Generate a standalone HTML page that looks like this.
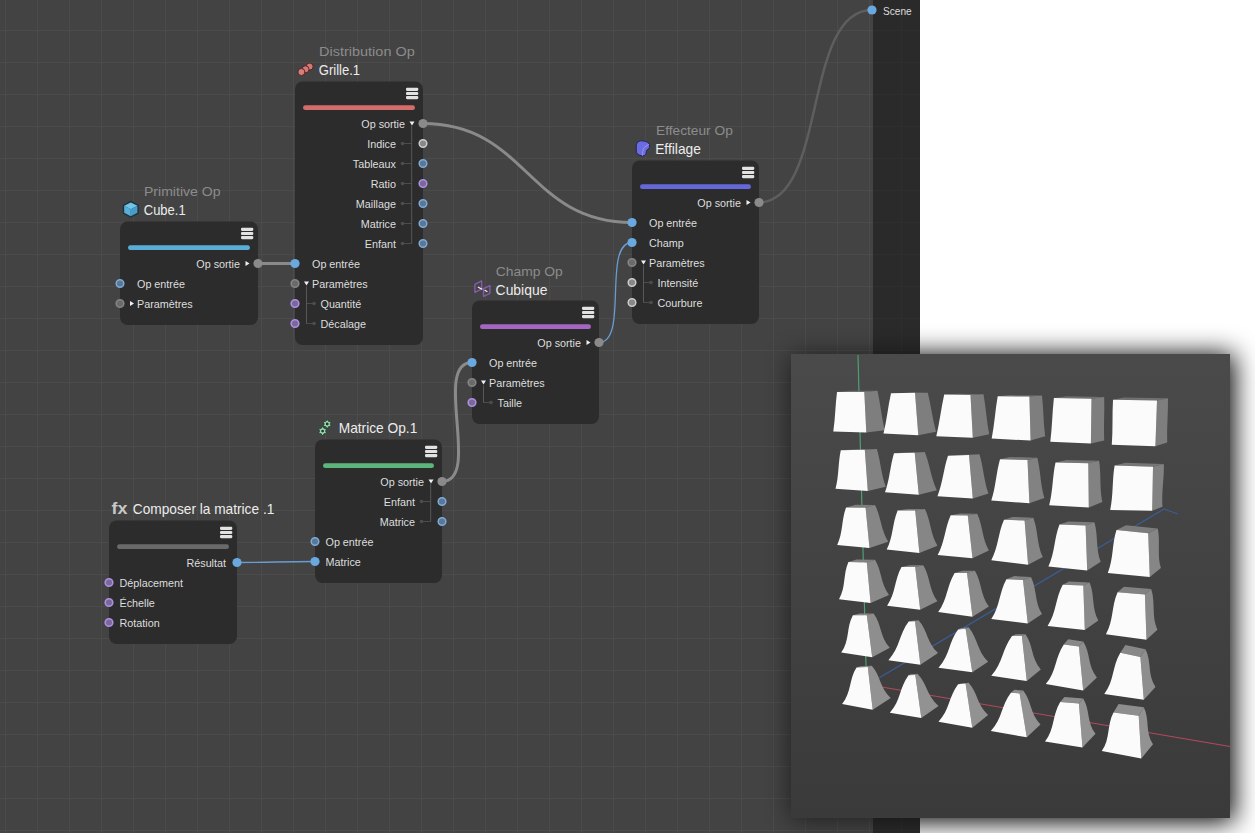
<!DOCTYPE html><html><head><meta charset="utf-8"><style>html,body{margin:0;padding:0;background:#fff;overflow:hidden}svg{display:block}text{font-family:"Liberation Sans",sans-serif}</style></head><body>
<svg width="1255" height="833" viewBox="0 0 1255 833">
<defs>
<pattern id="grid" x="5" y="30" width="32" height="32" patternUnits="userSpaceOnUse"><rect width="32" height="32" fill="#434343"/><rect width="1" height="32" fill="#4b4b4b"/><rect width="32" height="1" fill="#4b4b4b"/></pattern>
<pattern id="grid2" x="5" y="30" width="32" height="32" patternUnits="userSpaceOnUse"><rect width="32" height="32" fill="#2a2a2a"/><rect width="1" height="32" fill="#2e2e2e"/><rect width="32" height="1" fill="#2e2e2e"/></pattern>
<linearGradient id="vpg" x1="0" y1="0" x2="0" y2="1"><stop offset="0" stop-color="#4a4a4a"/><stop offset="1" stop-color="#3a3a3a"/></linearGradient>
<filter id="sh" x="-30%" y="-30%" width="160%" height="160%"><feGaussianBlur stdDeviation="13"/></filter>
</defs>
<rect width="920" height="833" fill="url(#grid)"/>
<rect x="873" width="47" height="833" fill="url(#grid2)"/>
<path d="M258 263.5L295 263.5" stroke="#8a8a8a" stroke-width="3" fill="none"/>
<path d="M423 123.5C527.5 123.5 527.5 222.5 632 222.5" stroke="#8a8a8a" stroke-width="3" fill="none"/>
<path d="M758 202.5C828 202.5 802 10 872 10" stroke="#5e5e5e" stroke-width="2.5" fill="none"/>
<path d="M442 481.5C482 481.5 432 362.5 472 362.5" stroke="#8a8a8a" stroke-width="3" fill="none"/>
<path d="M599 342.5C629 342.5 602 242.5 632 242.5" stroke="#6a9cd0" stroke-width="1.3" fill="none"/>
<path d="M237 562.5C276 562.5 276 561.5 315 561.5" stroke="#6a9cd0" stroke-width="1.3" fill="none"/>
<circle cx="872" cy="10" r="4.6" fill="#6aa8e0"/>
<text transform="translate(883 15) scale(0.92 1)" text-anchor="start" font-size="11" fill="#dedede" font-weight="normal">Scene</text>
<text x="144" y="196" textLength="76.5" lengthAdjust="spacingAndGlyphs" text-anchor="start" font-size="13.7" fill="#8c8c8c" font-weight="normal">Primitive Op</text>
<text x="143.8" y="215.2" textLength="41.8" lengthAdjust="spacingAndGlyphs" text-anchor="start" font-size="14.2" fill="#ececec" font-weight="normal">Cube.1</text>
<rect x="120" y="221.6" width="138" height="103.4" rx="7.5" fill="#2c2c2c"/>
<rect x="241" y="227.80" width="12.3" height="3.1" rx="1.1" fill="#e2e2e2"/>
<rect x="241" y="231.95" width="12.3" height="3.1" rx="1.1" fill="#e2e2e2"/>
<rect x="241" y="236.10" width="12.3" height="3.1" rx="1.1" fill="#e2e2e2"/>
<rect x="128" y="245.2" width="122" height="4.9" rx="2.45" fill="#5aaed6"/>
<text transform="translate(240 268.3) scale(0.93 1)" text-anchor="end" font-size="11.6" fill="#dedede" font-weight="normal">Op sortie</text>
<path d="M245.5 260.9L249.5 263.5L245.5 266.1Z" fill="#f0f0f0"/>
<circle cx="258" cy="263.5" r="4.6" fill="#8a8a8a"/>
<text transform="translate(137 288.3) scale(0.93 1)" text-anchor="start" font-size="11.6" fill="#dedede" font-weight="normal">Op entrée</text>
<circle cx="120" cy="283.5" r="3.8" fill="#587898" stroke="#80aad6" stroke-width="1.5"/>
<path d="M130 300.9L134 303.5L130 306.1Z" fill="#f0f0f0"/>
<text transform="translate(137 308.3) scale(0.93 1)" text-anchor="start" font-size="11.6" fill="#dedede" font-weight="normal">Paramètres</text>
<circle cx="120" cy="303.5" r="3.8" fill="#6a6a6a" stroke="#848484" stroke-width="1.6"/>
<text x="319" y="56" textLength="95.8" lengthAdjust="spacingAndGlyphs" text-anchor="start" font-size="13.7" fill="#8c8c8c" font-weight="normal">Distribution Op</text>
<text x="318.8" y="75" textLength="41.3" lengthAdjust="spacingAndGlyphs" text-anchor="start" font-size="14.2" fill="#ececec" font-weight="normal">Grille.1</text>
<rect x="295" y="81.6" width="128" height="263.4" rx="7.5" fill="#2c2c2c"/>
<rect x="406" y="87.80" width="12.3" height="3.1" rx="1.1" fill="#e2e2e2"/>
<rect x="406" y="91.95" width="12.3" height="3.1" rx="1.1" fill="#e2e2e2"/>
<rect x="406" y="96.10" width="12.3" height="3.1" rx="1.1" fill="#e2e2e2"/>
<rect x="303" y="105.2" width="112" height="4.9" rx="2.45" fill="#d46c6c"/>
<text transform="translate(405 128.3) scale(0.93 1)" text-anchor="end" font-size="11.6" fill="#dedede" font-weight="normal">Op sortie</text>
<path d="M409.5 121.5L414.5 121.5L412.0 125.5Z" fill="#f0f0f0"/>
<circle cx="423" cy="123.5" r="4.6" fill="#8a8a8a"/>
<text transform="translate(396 148.3) scale(0.93 1)" text-anchor="end" font-size="11.6" fill="#dedede" font-weight="normal">Indice</text>
<circle cx="402.5" cy="143.5" r="1.8" fill="#4e4e4e"/>
<line x1="402.5" y1="143.5" x2="411.7" y2="143.5" stroke="#4c4c4c" stroke-width="1"/>
<circle cx="423" cy="143.5" r="3.8" fill="#888888" stroke="#cccccc" stroke-width="1.5"/>
<text transform="translate(396 168.3) scale(0.93 1)" text-anchor="end" font-size="11.6" fill="#dedede" font-weight="normal">Tableaux</text>
<circle cx="402.5" cy="163.5" r="1.8" fill="#4e4e4e"/>
<line x1="402.5" y1="163.5" x2="411.7" y2="163.5" stroke="#4c4c4c" stroke-width="1"/>
<circle cx="423" cy="163.5" r="3.8" fill="#587898" stroke="#80aad6" stroke-width="1.5"/>
<text transform="translate(396 188.3) scale(0.93 1)" text-anchor="end" font-size="11.6" fill="#dedede" font-weight="normal">Ratio</text>
<circle cx="402.5" cy="183.5" r="1.8" fill="#4e4e4e"/>
<line x1="402.5" y1="183.5" x2="411.7" y2="183.5" stroke="#4c4c4c" stroke-width="1"/>
<circle cx="423" cy="183.5" r="3.8" fill="#7a6898" stroke="#ac8ee4" stroke-width="1.6"/>
<text transform="translate(396 208.3) scale(0.93 1)" text-anchor="end" font-size="11.6" fill="#dedede" font-weight="normal">Maillage</text>
<circle cx="402.5" cy="203.5" r="1.8" fill="#4e4e4e"/>
<line x1="402.5" y1="203.5" x2="411.7" y2="203.5" stroke="#4c4c4c" stroke-width="1"/>
<circle cx="423" cy="203.5" r="3.8" fill="#587898" stroke="#80aad6" stroke-width="1.5"/>
<text transform="translate(396 228.3) scale(0.93 1)" text-anchor="end" font-size="11.6" fill="#dedede" font-weight="normal">Matrice</text>
<circle cx="402.5" cy="223.5" r="1.8" fill="#4e4e4e"/>
<line x1="402.5" y1="223.5" x2="411.7" y2="223.5" stroke="#4c4c4c" stroke-width="1"/>
<circle cx="423" cy="223.5" r="3.8" fill="#587898" stroke="#80aad6" stroke-width="1.5"/>
<text transform="translate(396 248.3) scale(0.93 1)" text-anchor="end" font-size="11.6" fill="#dedede" font-weight="normal">Enfant</text>
<circle cx="402.5" cy="243.5" r="1.8" fill="#4e4e4e"/>
<line x1="402.5" y1="243.5" x2="411.7" y2="243.5" stroke="#4c4c4c" stroke-width="1"/>
<circle cx="423" cy="243.5" r="3.8" fill="#587898" stroke="#80aad6" stroke-width="1.5"/>
<text transform="translate(312 268.3) scale(0.93 1)" text-anchor="start" font-size="11.6" fill="#dedede" font-weight="normal">Op entrée</text>
<circle cx="295" cy="263.5" r="4.6" fill="#6aa8e0"/>
<path d="M304 281.5L309 281.5L306.5 285.5Z" fill="#f0f0f0"/>
<text transform="translate(312 288.3) scale(0.93 1)" text-anchor="start" font-size="11.6" fill="#dedede" font-weight="normal">Paramètres</text>
<circle cx="295" cy="283.5" r="3.8" fill="#6a6a6a" stroke="#848484" stroke-width="1.6"/>
<circle cx="314" cy="303.5" r="1.8" fill="#4e4e4e"/>
<line x1="306.3" y1="303.5" x2="314" y2="303.5" stroke="#4c4c4c" stroke-width="1"/>
<text transform="translate(320.5 308.3) scale(0.93 1)" text-anchor="start" font-size="11.6" fill="#dedede" font-weight="normal">Quantité</text>
<circle cx="295" cy="303.5" r="3.8" fill="#7a6898" stroke="#ac8ee4" stroke-width="1.6"/>
<circle cx="314" cy="323.5" r="1.8" fill="#4e4e4e"/>
<line x1="306.3" y1="323.5" x2="314" y2="323.5" stroke="#4c4c4c" stroke-width="1"/>
<text transform="translate(320.5 328.3) scale(0.93 1)" text-anchor="start" font-size="11.6" fill="#dedede" font-weight="normal">Décalage</text>
<circle cx="295" cy="323.5" r="3.8" fill="#7a6898" stroke="#ac8ee4" stroke-width="1.6"/>
<line x1="411.7" y1="125.5" x2="411.7" y2="243.5" stroke="#585858" stroke-width="1"/>
<line x1="306.5" y1="286.5" x2="306.5" y2="323.5" stroke="#585858" stroke-width="1"/>
<text x="656" y="135" textLength="76.8" lengthAdjust="spacingAndGlyphs" text-anchor="start" font-size="13.7" fill="#8c8c8c" font-weight="normal">Effecteur Op</text>
<text x="655.2" y="154" textLength="45.7" lengthAdjust="spacingAndGlyphs" text-anchor="start" font-size="14.2" fill="#ececec" font-weight="normal">Effilage</text>
<rect x="632" y="160.6" width="127" height="163.4" rx="7.5" fill="#2c2c2c"/>
<rect x="742" y="166.80" width="12.3" height="3.1" rx="1.1" fill="#e2e2e2"/>
<rect x="742" y="170.95" width="12.3" height="3.1" rx="1.1" fill="#e2e2e2"/>
<rect x="742" y="175.10" width="12.3" height="3.1" rx="1.1" fill="#e2e2e2"/>
<rect x="640" y="184.2" width="111" height="4.9" rx="2.45" fill="#6468d8"/>
<text transform="translate(741 207.3) scale(0.93 1)" text-anchor="end" font-size="11.6" fill="#dedede" font-weight="normal">Op sortie</text>
<path d="M746.5 199.9L750.5 202.5L746.5 205.1Z" fill="#f0f0f0"/>
<circle cx="759" cy="202.5" r="4.6" fill="#8a8a8a"/>
<text transform="translate(649 227.3) scale(0.93 1)" text-anchor="start" font-size="11.6" fill="#dedede" font-weight="normal">Op entrée</text>
<circle cx="632" cy="222.5" r="4.6" fill="#6aa8e0"/>
<text transform="translate(649 247.3) scale(0.93 1)" text-anchor="start" font-size="11.6" fill="#dedede" font-weight="normal">Champ</text>
<circle cx="632" cy="242.5" r="4.6" fill="#6aa8e0"/>
<path d="M641 260.5L646 260.5L643.5 264.5Z" fill="#f0f0f0"/>
<text transform="translate(649 267.3) scale(0.93 1)" text-anchor="start" font-size="11.6" fill="#dedede" font-weight="normal">Paramètres</text>
<circle cx="632" cy="262.5" r="3.8" fill="#6a6a6a" stroke="#848484" stroke-width="1.6"/>
<circle cx="651" cy="282.5" r="1.8" fill="#4e4e4e"/>
<line x1="643.3" y1="282.5" x2="651" y2="282.5" stroke="#4c4c4c" stroke-width="1"/>
<text transform="translate(657.5 287.3) scale(0.93 1)" text-anchor="start" font-size="11.6" fill="#dedede" font-weight="normal">Intensité</text>
<circle cx="632" cy="282.5" r="3.8" fill="#888888" stroke="#cccccc" stroke-width="1.5"/>
<circle cx="651" cy="302.5" r="1.8" fill="#4e4e4e"/>
<line x1="643.3" y1="302.5" x2="651" y2="302.5" stroke="#4c4c4c" stroke-width="1"/>
<text transform="translate(657.5 307.3) scale(0.93 1)" text-anchor="start" font-size="11.6" fill="#dedede" font-weight="normal">Courbure</text>
<circle cx="632" cy="302.5" r="3.8" fill="#888888" stroke="#cccccc" stroke-width="1.5"/>
<line x1="643.5" y1="265.5" x2="643.5" y2="302.5" stroke="#585858" stroke-width="1"/>
<text x="495.8" y="276" textLength="67" lengthAdjust="spacingAndGlyphs" text-anchor="start" font-size="13.7" fill="#8c8c8c" font-weight="normal">Champ Op</text>
<text x="495.6" y="295" textLength="51.8" lengthAdjust="spacingAndGlyphs" text-anchor="start" font-size="14.2" fill="#ececec" font-weight="normal">Cubique</text>
<rect x="472" y="300.6" width="127" height="123.4" rx="7.5" fill="#2c2c2c"/>
<rect x="582" y="306.80" width="12.3" height="3.1" rx="1.1" fill="#e2e2e2"/>
<rect x="582" y="310.95" width="12.3" height="3.1" rx="1.1" fill="#e2e2e2"/>
<rect x="582" y="315.10" width="12.3" height="3.1" rx="1.1" fill="#e2e2e2"/>
<rect x="480" y="324.2" width="111" height="4.9" rx="2.45" fill="#a466c0"/>
<text transform="translate(581 347.3) scale(0.93 1)" text-anchor="end" font-size="11.6" fill="#dedede" font-weight="normal">Op sortie</text>
<path d="M586.5 339.9L590.5 342.5L586.5 345.1Z" fill="#f0f0f0"/>
<circle cx="599" cy="342.5" r="4.6" fill="#8a8a8a"/>
<text transform="translate(489 367.3) scale(0.93 1)" text-anchor="start" font-size="11.6" fill="#dedede" font-weight="normal">Op entrée</text>
<circle cx="472" cy="362.5" r="4.6" fill="#6aa8e0"/>
<path d="M481 380.5L486 380.5L483.5 384.5Z" fill="#f0f0f0"/>
<text transform="translate(489 387.3) scale(0.93 1)" text-anchor="start" font-size="11.6" fill="#dedede" font-weight="normal">Paramètres</text>
<circle cx="472" cy="382.5" r="3.8" fill="#6a6a6a" stroke="#848484" stroke-width="1.6"/>
<circle cx="491" cy="402.5" r="1.8" fill="#4e4e4e"/>
<line x1="483.3" y1="402.5" x2="491" y2="402.5" stroke="#4c4c4c" stroke-width="1"/>
<text transform="translate(497.5 407.3) scale(0.93 1)" text-anchor="start" font-size="11.6" fill="#dedede" font-weight="normal">Taille</text>
<circle cx="472" cy="402.5" r="3.8" fill="#7a6898" stroke="#ac8ee4" stroke-width="1.6"/>
<line x1="483.5" y1="385.5" x2="483.5" y2="402.5" stroke="#585858" stroke-width="1"/>
<text x="338.7" y="433" textLength="78.6" lengthAdjust="spacingAndGlyphs" text-anchor="start" font-size="14.2" fill="#ececec" font-weight="normal">Matrice Op.1</text>
<rect x="315" y="439.6" width="127" height="143.4" rx="7.5" fill="#2c2c2c"/>
<rect x="425" y="445.80" width="12.3" height="3.1" rx="1.1" fill="#e2e2e2"/>
<rect x="425" y="449.95" width="12.3" height="3.1" rx="1.1" fill="#e2e2e2"/>
<rect x="425" y="454.10" width="12.3" height="3.1" rx="1.1" fill="#e2e2e2"/>
<rect x="323" y="463.2" width="111" height="4.9" rx="2.45" fill="#5cb67c"/>
<text transform="translate(424 486.3) scale(0.93 1)" text-anchor="end" font-size="11.6" fill="#dedede" font-weight="normal">Op sortie</text>
<path d="M428.5 479.5L433.5 479.5L431.0 483.5Z" fill="#f0f0f0"/>
<circle cx="442" cy="481.5" r="4.6" fill="#8a8a8a"/>
<text transform="translate(415 506.3) scale(0.93 1)" text-anchor="end" font-size="11.6" fill="#dedede" font-weight="normal">Enfant</text>
<circle cx="421.5" cy="501.5" r="1.8" fill="#4e4e4e"/>
<line x1="421.5" y1="501.5" x2="430.7" y2="501.5" stroke="#4c4c4c" stroke-width="1"/>
<circle cx="442" cy="501.5" r="3.8" fill="#587898" stroke="#80aad6" stroke-width="1.5"/>
<text transform="translate(415 526.3) scale(0.93 1)" text-anchor="end" font-size="11.6" fill="#dedede" font-weight="normal">Matrice</text>
<circle cx="421.5" cy="521.5" r="1.8" fill="#4e4e4e"/>
<line x1="421.5" y1="521.5" x2="430.7" y2="521.5" stroke="#4c4c4c" stroke-width="1"/>
<circle cx="442" cy="521.5" r="3.8" fill="#587898" stroke="#80aad6" stroke-width="1.5"/>
<text transform="translate(325.5 546.3) scale(0.93 1)" text-anchor="start" font-size="11.6" fill="#dedede" font-weight="normal">Op entrée</text>
<circle cx="315" cy="541.5" r="3.8" fill="#587898" stroke="#80aad6" stroke-width="1.5"/>
<text transform="translate(325.5 566.3) scale(0.93 1)" text-anchor="start" font-size="11.6" fill="#dedede" font-weight="normal">Matrice</text>
<circle cx="315" cy="561.5" r="4.6" fill="#6aa8e0"/>
<line x1="430.7" y1="483.5" x2="430.7" y2="521.5" stroke="#585858" stroke-width="1"/>
<text x="132.8" y="514" textLength="141.5" lengthAdjust="spacingAndGlyphs" text-anchor="start" font-size="14.2" fill="#ececec" font-weight="normal">Composer la matrice .1</text>
<rect x="109" y="520.6" width="128" height="123.4" rx="7.5" fill="#2c2c2c"/>
<rect x="220" y="526.80" width="12.3" height="3.1" rx="1.1" fill="#e2e2e2"/>
<rect x="220" y="530.95" width="12.3" height="3.1" rx="1.1" fill="#e2e2e2"/>
<rect x="220" y="535.10" width="12.3" height="3.1" rx="1.1" fill="#e2e2e2"/>
<rect x="117" y="544.2" width="112" height="4.9" rx="2.45" fill="#6a6a6a"/>
<text transform="translate(226 567.3) scale(0.93 1)" text-anchor="end" font-size="11.6" fill="#dedede" font-weight="normal">Résultat</text>
<circle cx="237" cy="562.5" r="4.6" fill="#6aa8e0"/>
<text transform="translate(119.5 587.3) scale(0.93 1)" text-anchor="start" font-size="11.6" fill="#dedede" font-weight="normal">Déplacement</text>
<circle cx="109" cy="582.5" r="3.8" fill="#7a6898" stroke="#ac8ee4" stroke-width="1.6"/>
<text transform="translate(119.5 607.3) scale(0.93 1)" text-anchor="start" font-size="11.6" fill="#dedede" font-weight="normal">Échelle</text>
<circle cx="109" cy="602.5" r="3.8" fill="#7a6898" stroke="#ac8ee4" stroke-width="1.6"/>
<text transform="translate(119.5 627.3) scale(0.93 1)" text-anchor="start" font-size="11.6" fill="#dedede" font-weight="normal">Rotation</text>
<circle cx="109" cy="622.5" r="3.8" fill="#7a6898" stroke="#ac8ee4" stroke-width="1.6"/>
<g stroke-linejoin="round">
<path d="M130.8 201.4L138.3 205.3L138.3 213.2L130.8 217.1L123.3 213.2L123.3 205.3Z" fill="#1e3440" stroke="#1e3440" stroke-width="1.2"/>
<path d="M130.8 202.4L137.4 205.8L130.8 209.3L124.2 205.8Z" fill="#72c4e6"/>
<path d="M124.2 205.8L130.8 209.3L130.8 216.2L124.2 212.7Z" fill="#58b0da"/>
<path d="M130.8 209.3L137.4 205.8L137.4 212.7L130.8 216.2Z" fill="#4a9cc6"/>
</g>
<g stroke="#4a2020" stroke-width="0.9">
<circle cx="309.6" cy="66.6" r="3.5" fill="#d47878"/>
<circle cx="305.5" cy="69.3" r="3.5" fill="#d47878"/>
<circle cx="301.4" cy="72" r="3.5" fill="#d87c7c"/>
</g>
<path d="M636.2 145.2Q636.6 141.2 640.6 140.8L644.2 141.1Q648 141.6 649.4 144.2L649.5 147.6Q648.6 149.1 647.2 149.8Q646 151.3 646 154.2Q644.6 156.1 642.3 156Q638.8 155.6 636.4 152.8Z" fill="#6a6ce0" stroke="#202050" stroke-width="0.9"/>
<path d="M649 144.4Q645 146 643.4 148.8Q642.4 151.6 642.5 155.6" fill="none" stroke="#9a9cf0" stroke-width="0.9"/>
<g fill="none" stroke="#8a5cb0" stroke-width="1.3" stroke-linejoin="round">
<path d="M474.9 284.3L481.7 280.9L481.7 289L474.9 292.4Z"/>
<path d="M483.5 288.7L489.9 285.6L489.9 293.4L483.5 296.5Z"/>
</g>
<g stroke="#f0e8f8" stroke-width="1.2" stroke-linecap="round">
<path d="M478.3 287.2L481.8 289.1"/>
<path d="M484.9 290.3L487 291.5"/>
</g>
<g fill="#98d8b0" stroke="#1c3a28" stroke-width="0.7">
<path d="M327.20 419.40L328.65 421.49L331.18 421.70L330.10 424.00L331.18 426.30L328.65 426.51L327.20 428.60L325.75 426.51L323.22 426.30L324.30 424.00L323.22 421.70L325.75 421.49Z"/>
<path d="M322.60 426.50L324.05 428.59L326.58 428.80L325.50 431.10L326.58 433.40L324.05 433.61L322.60 435.70L321.15 433.61L318.62 433.40L319.70 431.10L318.62 428.80L321.15 428.59Z"/>
</g>
<circle cx="327.2" cy="424" r="1.4" fill="#1c3a28"/>
<circle cx="322.6" cy="431.1" r="1.4" fill="#1c3a28"/>
<text x="111.6" y="513.8" font-size="17" font-weight="bold" fill="#c8c8c8" textLength="16" lengthAdjust="spacingAndGlyphs">fx</text>

<clipPath id="cl"><rect x="0" y="0" width="920" height="833"/></clipPath><clipPath id="cr"><rect x="920" y="0" width="335" height="833"/></clipPath>
<g clip-path="url(#cl)"><rect x="791" y="355" width="441" height="465" fill="#000" opacity="0.55" filter="url(#sh)"/></g>
<g clip-path="url(#cr)"><rect x="789" y="354" width="445" height="468" fill="#000" opacity="1" filter="url(#sh)"/></g>
<rect x="791" y="354" width="439" height="464" fill="url(#vpg)"/>
<line x1="858" y1="355" x2="866.5" y2="685" stroke="#4ea072" stroke-width="1.2"/>
<line x1="867" y1="685" x2="1164" y2="509" stroke="#3a5e98" stroke-width="1.2"/>
<path d="M1164 509L1178 514" stroke="#3a5e98" stroke-width="1.2" fill="none"/>
<line x1="867" y1="684.5" x2="1230" y2="746.5" stroke="#b44a58" stroke-width="1.1"/>
<path d="M837.0 392.0L850.2 390.8L877.5 390.8L864.3 392.0Z" fill="#707070"/>
<path d="M864.3 392.0L877.5 390.8C880.4 404.0 881.6 417.1 884.7 430.3L866.3 432.5Z" fill="#7e7e7e"/>
<path d="M833.3 431.5C835.3 418.3 835.3 405.2 837.0 392.0L864.3 392.0L866.3 432.5Z" fill="#fbfbfb"/>
<path d="M891.0 393.2L903.8 393.2L927.8 392.8L915.0 392.8Z" fill="#707070"/>
<path d="M915.0 392.8L927.8 392.8C931.0 405.8 932.5 418.8 936.0 431.8L918.3 435.2Z" fill="#7e7e7e"/>
<path d="M883.5 433.5C886.8 420.1 888.0 406.6 891.0 393.2L915.0 392.8L918.3 435.2Z" fill="#fbfbfb"/>
<path d="M944.2 394.5L957.2 393.8L983.5 394.2L970.5 395.0Z" fill="#707070"/>
<path d="M970.5 395.0L983.5 394.2C985.9 407.6 986.6 420.9 989.2 434.3L972.8 437.8Z" fill="#7e7e7e"/>
<path d="M936.3 436.2C939.7 422.3 941.1 408.4 944.2 394.5L970.5 395.0L972.8 437.8Z" fill="#fbfbfb"/>
<path d="M997.7 396.3L1010.3 395.1L1042.0 395.4L1029.4 396.6Z" fill="#707070"/>
<path d="M1029.4 396.6L1042.0 395.4C1043.5 409.0 1043.4 422.7 1045.2 436.3L1030.6 440.5Z" fill="#7e7e7e"/>
<path d="M991.7 438.6C994.5 424.5 995.2 410.4 997.7 396.3L1029.4 396.6L1030.6 440.5Z" fill="#fbfbfb"/>
<path d="M1053.9 397.9L1066.6 396.3L1104.2 397.1L1091.5 398.7Z" fill="#707070"/>
<path d="M1091.5 398.7L1104.2 397.1C1104.7 411.6 1103.5 426.0 1104.2 440.5L1090.9 443.4Z" fill="#7e7e7e"/>
<path d="M1050.3 441.8C1052.2 427.2 1052.2 412.5 1053.9 397.9L1091.5 398.7L1090.9 443.4Z" fill="#fbfbfb"/>
<path d="M1113.0 399.8L1124.0 397.4L1168.0 398.2L1157.0 400.6Z" fill="#707070"/>
<path d="M1157.0 400.6L1168.0 398.2C1168.2 413.0 1166.7 427.8 1167.2 442.6L1155.4 446.2Z" fill="#7e7e7e"/>
<path d="M1111.8 444.7C1113.0 429.7 1112.1 414.8 1113.0 399.8L1157.0 400.6L1155.4 446.2Z" fill="#fbfbfb"/>
<path d="M840.8 450.2L852.8 449.4L876.8 449.0L864.8 449.8Z" fill="#767676"/>
<path d="M864.8 449.8L876.8 449.0C880.8 461.6 881.0 474.2 885.8 486.8L867.8 491.0Z" fill="#828282"/>
<path d="M835.5 488.8C839.0 475.9 838.0 463.1 840.8 450.2L864.8 449.8L867.8 491.0Z" fill="#fbfbfb"/>
<path d="M894.0 453.2L904.0 452.4L924.8 452.0L914.7 452.8Z" fill="#767676"/>
<path d="M914.7 452.8L924.8 452.0C929.8 464.8 931.0 477.5 936.8 490.2L918.8 494.8Z" fill="#828282"/>
<path d="M885.0 492.2C889.8 479.2 890.0 466.2 894.0 453.2L914.7 452.8L918.8 494.8Z" fill="#fbfbfb"/>
<path d="M948.0 455.8L958.5 455.0L979.5 454.2L969.0 455.0Z" fill="#767676"/>
<path d="M969.0 455.0L979.5 454.2C983.5 467.3 983.8 480.4 988.5 493.5L972.8 498.5Z" fill="#828282"/>
<path d="M937.5 496.2C942.8 482.8 943.5 469.2 948.0 455.8L969.0 455.0L972.8 498.5Z" fill="#fbfbfb"/>
<path d="M1000.0 459.2L1009.8 456.9L1037.3 457.7L1027.5 460.0Z" fill="#767676"/>
<path d="M1027.5 460.0L1037.3 457.7C1040.7 471.1 1040.3 484.6 1044.4 498.0L1029.4 503.3Z" fill="#828282"/>
<path d="M991.3 500.4C995.9 486.7 996.1 472.9 1000.0 459.2L1027.5 460.0L1029.4 503.3Z" fill="#fbfbfb"/>
<path d="M1055.5 462.4L1066.3 460.0L1099.1 460.8L1088.3 463.2Z" fill="#767676"/>
<path d="M1088.3 463.2L1099.1 460.8C1101.2 474.5 1099.5 488.3 1102.3 502.0L1088.8 507.6Z" fill="#828282"/>
<path d="M1049.2 505.2C1053.0 490.9 1052.4 476.7 1055.5 462.4L1088.3 463.2L1088.8 507.6Z" fill="#fbfbfb"/>
<path d="M1114.6 465.6L1125.4 462.8L1163.8 464.0L1153.0 466.8Z" fill="#767676"/>
<path d="M1153.0 466.8L1163.8 464.0C1164.4 478.3 1161.2 492.5 1162.5 506.8L1152.2 510.7Z" fill="#828282"/>
<path d="M1110.2 510.0C1113.4 495.2 1112.1 480.4 1114.6 465.6L1153.0 466.8L1152.2 510.7Z" fill="#fbfbfb"/>
<path d="M846.1 507.5L855.5 504.8L875.0 505.1L865.6 507.8Z" fill="#7c7c7c"/>
<path d="M865.6 507.8L875.0 505.1C881.2 517.3 880.8 529.6 888.2 541.8L869.5 548.1Z" fill="#868686"/>
<path d="M837.2 545.0C843.2 532.5 841.3 520.0 846.1 507.5L865.6 507.8L869.5 548.1Z" fill="#fbfbfb"/>
<path d="M897.6 510.6L907.3 509.0L924.9 509.0L915.2 510.6Z" fill="#7c7c7c"/>
<path d="M915.2 510.6L924.9 509.0C930.9 521.2 930.2 533.5 937.4 545.7L919.4 553.1Z" fill="#868686"/>
<path d="M886.7 549.6C893.3 536.6 892.2 523.6 897.6 510.6L915.2 510.6L919.4 553.1Z" fill="#fbfbfb"/>
<path d="M950.7 515.3L960.1 513.4L977.2 513.7L967.8 515.6Z" fill="#7c7c7c"/>
<path d="M967.8 515.6L977.2 513.7C982.9 525.9 982.0 538.2 988.9 550.4L972.5 558.2Z" fill="#868686"/>
<path d="M937.7 555.1C945.0 541.8 944.6 528.6 950.7 515.3L967.8 515.6L972.5 558.2Z" fill="#fbfbfb"/>
<path d="M1004.0 519.8L1012.7 516.9L1033.3 517.7L1024.6 520.6Z" fill="#7c7c7c"/>
<path d="M1024.6 520.6L1033.3 517.7C1038.3 530.8 1036.6 543.9 1042.8 557.0L1028.1 564.7Z" fill="#868686"/>
<path d="M991.3 560.2C998.5 546.7 998.0 533.3 1004.0 519.8L1024.6 520.6L1028.1 564.7Z" fill="#fbfbfb"/>
<path d="M1059.5 524.6L1068.3 521.4L1094.4 522.2L1085.6 525.4Z" fill="#7c7c7c"/>
<path d="M1085.6 525.4L1094.4 522.2C1098.3 535.4 1095.6 548.6 1100.7 561.8L1087.2 570.5Z" fill="#868686"/>
<path d="M1048.4 566.6C1055.1 552.6 1054.0 538.6 1059.5 524.6L1085.6 525.4L1087.2 570.5Z" fill="#fbfbfb"/>
<path d="M1116.5 530.1L1126.0 525.3L1157.7 528.5L1148.2 533.3Z" fill="#7c7c7c"/>
<path d="M1148.2 533.3L1157.7 528.5C1160.6 541.7 1156.8 554.9 1160.9 568.1L1149.8 576.9Z" fill="#868686"/>
<path d="M1107.8 572.9C1113.7 558.6 1111.8 544.4 1116.5 530.1L1148.2 533.3L1149.8 576.9Z" fill="#fbfbfb"/>
<path d="M848.4 562.1L856.6 559.5L875.0 559.8L866.8 562.4Z" fill="#828282"/>
<path d="M866.8 562.4L875.0 559.8C882.1 571.5 880.3 583.2 889.0 594.9L870.6 603.0Z" fill="#8a8a8a"/>
<path d="M839.0 599.3C846.1 586.9 842.9 574.5 848.4 562.1L866.8 562.4L870.6 603.0Z" fill="#fbfbfb"/>
<path d="M901.5 567.1L909.6 565.2L923.3 565.2L915.2 567.1Z" fill="#828282"/>
<path d="M915.2 567.1L923.3 565.2C930.4 577.2 928.7 589.2 937.4 601.2L920.2 609.7Z" fill="#8a8a8a"/>
<path d="M887.1 605.8C895.9 592.9 894.3 580.0 901.5 567.1L915.2 567.1L920.2 609.7Z" fill="#fbfbfb"/>
<path d="M954.6 573.0L962.5 570.7L974.9 570.7L967.0 573.0Z" fill="#828282"/>
<path d="M967.0 573.0L974.9 570.7C982.0 582.7 980.2 594.6 988.9 606.6L972.5 616.8Z" fill="#8a8a8a"/>
<path d="M938.2 612.1C947.7 599.1 946.7 586.0 954.6 573.0L967.0 573.0L972.5 616.8Z" fill="#fbfbfb"/>
<path d="M1006.4 579.2L1014.4 576.1L1031.0 576.9L1023.0 580.0Z" fill="#828282"/>
<path d="M1023.0 580.0L1031.0 576.9C1037.1 589.3 1034.3 601.7 1042.0 614.1L1027.8 623.6Z" fill="#8a8a8a"/>
<path d="M991.3 618.9C1000.3 605.7 999.0 592.4 1006.4 579.2L1023.0 580.0L1027.8 623.6Z" fill="#fbfbfb"/>
<path d="M1062.7 584.8L1069.0 581.6L1089.6 582.4L1083.3 585.6Z" fill="#828282"/>
<path d="M1083.3 585.6L1089.6 582.4C1094.9 595.1 1091.4 607.7 1098.3 620.4L1084.8 630.0Z" fill="#8a8a8a"/>
<path d="M1047.6 626.0C1056.6 612.3 1055.3 598.5 1062.7 584.8L1083.3 585.6L1084.8 630.0Z" fill="#fbfbfb"/>
<path d="M1117.6 592.2L1123.9 586.7L1151.2 589.1L1144.9 594.6Z" fill="#828282"/>
<path d="M1144.9 594.6L1151.2 589.1C1155.7 602.6 1151.3 616.2 1157.4 629.7L1146.5 639.8Z" fill="#8a8a8a"/>
<path d="M1105.9 634.3C1113.8 620.3 1111.3 606.2 1117.6 592.2L1144.9 594.6L1146.5 639.8Z" fill="#fbfbfb"/>
<path d="M852.9 615.3L859.7 613.5L873.6 613.5L866.8 615.3Z" fill="#888888"/>
<path d="M866.8 615.3L873.6 613.5C882.0 624.9 879.4 636.3 889.8 647.7L872.2 657.2Z" fill="#8e8e8e"/>
<path d="M841.2 652.6C850.1 640.2 846.0 627.7 852.9 615.3L866.8 615.3L872.2 657.2Z" fill="#fbfbfb"/>
<path d="M908.7 621.6L912.3 620.7L918.6 620.3L915.0 621.2Z" fill="#888888"/>
<path d="M915.0 621.2L918.6 620.3C928.1 631.2 926.5 642.2 938.0 653.1L920.4 664.8Z" fill="#8e8e8e"/>
<path d="M888.4 660.3C900.2 647.4 898.9 634.5 908.7 621.6L915.0 621.2L920.4 664.8Z" fill="#fbfbfb"/>
<path d="M958.1 629.5L961.1 628.0L968.6 627.3L965.6 628.8Z" fill="#888888"/>
<path d="M965.6 628.8L968.6 627.3C978.1 638.8 976.6 650.3 988.1 661.8L972.3 672.3Z" fill="#8e8e8e"/>
<path d="M938.5 667.8C950.0 655.0 948.6 642.3 958.1 629.5L965.6 628.8L972.3 672.3Z" fill="#fbfbfb"/>
<path d="M1012.0 636.1L1015.6 634.3L1025.5 634.3L1021.9 636.1Z" fill="#888888"/>
<path d="M1021.9 636.1L1025.5 634.3C1033.6 646.0 1030.7 657.7 1040.8 669.4L1026.8 681.1Z" fill="#8e8e8e"/>
<path d="M991.3 675.7C1003.2 662.5 1002.1 649.3 1012.0 636.1L1021.9 636.1L1026.8 681.1Z" fill="#fbfbfb"/>
<path d="M1063.8 644.4L1068.1 639.3L1083.2 641.5L1078.9 646.6Z" fill="#888888"/>
<path d="M1078.9 646.6L1083.2 641.5C1090.8 653.5 1087.3 665.5 1096.9 677.5L1083.2 690.5Z" fill="#8e8e8e"/>
<path d="M1045.8 684.0C1056.8 670.8 1054.8 657.6 1063.8 644.4L1078.9 646.6L1083.2 690.5Z" fill="#fbfbfb"/>
<path d="M1120.3 652.7L1125.4 645.1L1145.5 649.3L1140.4 656.9Z" fill="#888888"/>
<path d="M1140.4 656.9L1145.5 649.3C1151.8 661.9 1147.2 674.5 1155.5 687.1L1143.8 699.7Z" fill="#8e8e8e"/>
<path d="M1104.3 693.9C1114.6 680.2 1112.0 666.4 1120.3 652.7L1140.4 656.9L1143.8 699.7Z" fill="#fbfbfb"/>
<path d="M856.5 667.5L860.5 666.2L871.8 665.7L867.8 667.0Z" fill="#8e8e8e"/>
<path d="M867.8 667.0L871.8 665.7C881.1 676.5 879.4 687.3 890.7 698.1L872.7 709.8Z" fill="#929292"/>
<path d="M842.1 704.0C851.9 691.8 848.7 679.7 856.5 667.5L867.8 667.0L872.7 709.8Z" fill="#fbfbfb"/>
<path d="M908.5 675.3L910.7 674.2L917.5 673.8L915.3 674.9Z" fill="#8e8e8e"/>
<path d="M915.3 674.9L917.5 673.8C927.5 684.6 926.5 695.3 938.5 706.1L921.3 718.1Z" fill="#929292"/>
<path d="M889.8 712.8C901.0 700.3 899.3 687.8 908.5 675.3L915.3 674.9L921.3 718.1Z" fill="#fbfbfb"/>
<path d="M958.1 684.3L961.1 683.5L968.6 682.8L965.6 683.6Z" fill="#8e8e8e"/>
<path d="M965.6 683.6L968.6 682.8C978.1 693.6 976.6 704.3 988.1 715.1L972.3 727.8Z" fill="#929292"/>
<path d="M938.5 721.8C950.0 709.3 948.6 696.8 958.1 684.3L965.6 683.6L972.3 727.8Z" fill="#fbfbfb"/>
<path d="M1010.9 692.7L1014.5 689.8L1023.2 690.5L1019.6 693.4Z" fill="#8e8e8e"/>
<path d="M1019.6 693.4L1023.2 690.5C1032.0 701.8 1029.7 713.1 1040.5 724.4L1026.8 737.3Z" fill="#929292"/>
<path d="M990.8 730.9C1002.5 718.2 1001.2 705.4 1010.9 692.7L1019.6 693.4L1026.8 737.3Z" fill="#fbfbfb"/>
<path d="M1060.2 702.0L1064.5 696.9L1083.2 698.4L1078.9 703.5Z" fill="#8e8e8e"/>
<path d="M1078.9 703.5L1083.2 698.4C1090.3 710.2 1086.4 721.9 1095.5 733.7L1082.5 747.4Z" fill="#929292"/>
<path d="M1045.0 741.6C1055.1 728.4 1052.1 715.2 1060.2 702.0L1078.9 703.5L1082.5 747.4Z" fill="#fbfbfb"/>
<path d="M1113.5 712.4L1118.6 704.0L1143.8 707.3L1138.7 715.7Z" fill="#8e8e8e"/>
<path d="M1138.7 715.7L1143.8 707.3C1149.9 719.6 1144.9 732.0 1153.0 744.3L1141.3 758.6Z" fill="#929292"/>
<path d="M1101.8 751.0C1110.7 738.1 1106.6 725.3 1113.5 712.4L1138.7 715.7L1141.3 758.6Z" fill="#fbfbfb"/>
</svg></body></html>
